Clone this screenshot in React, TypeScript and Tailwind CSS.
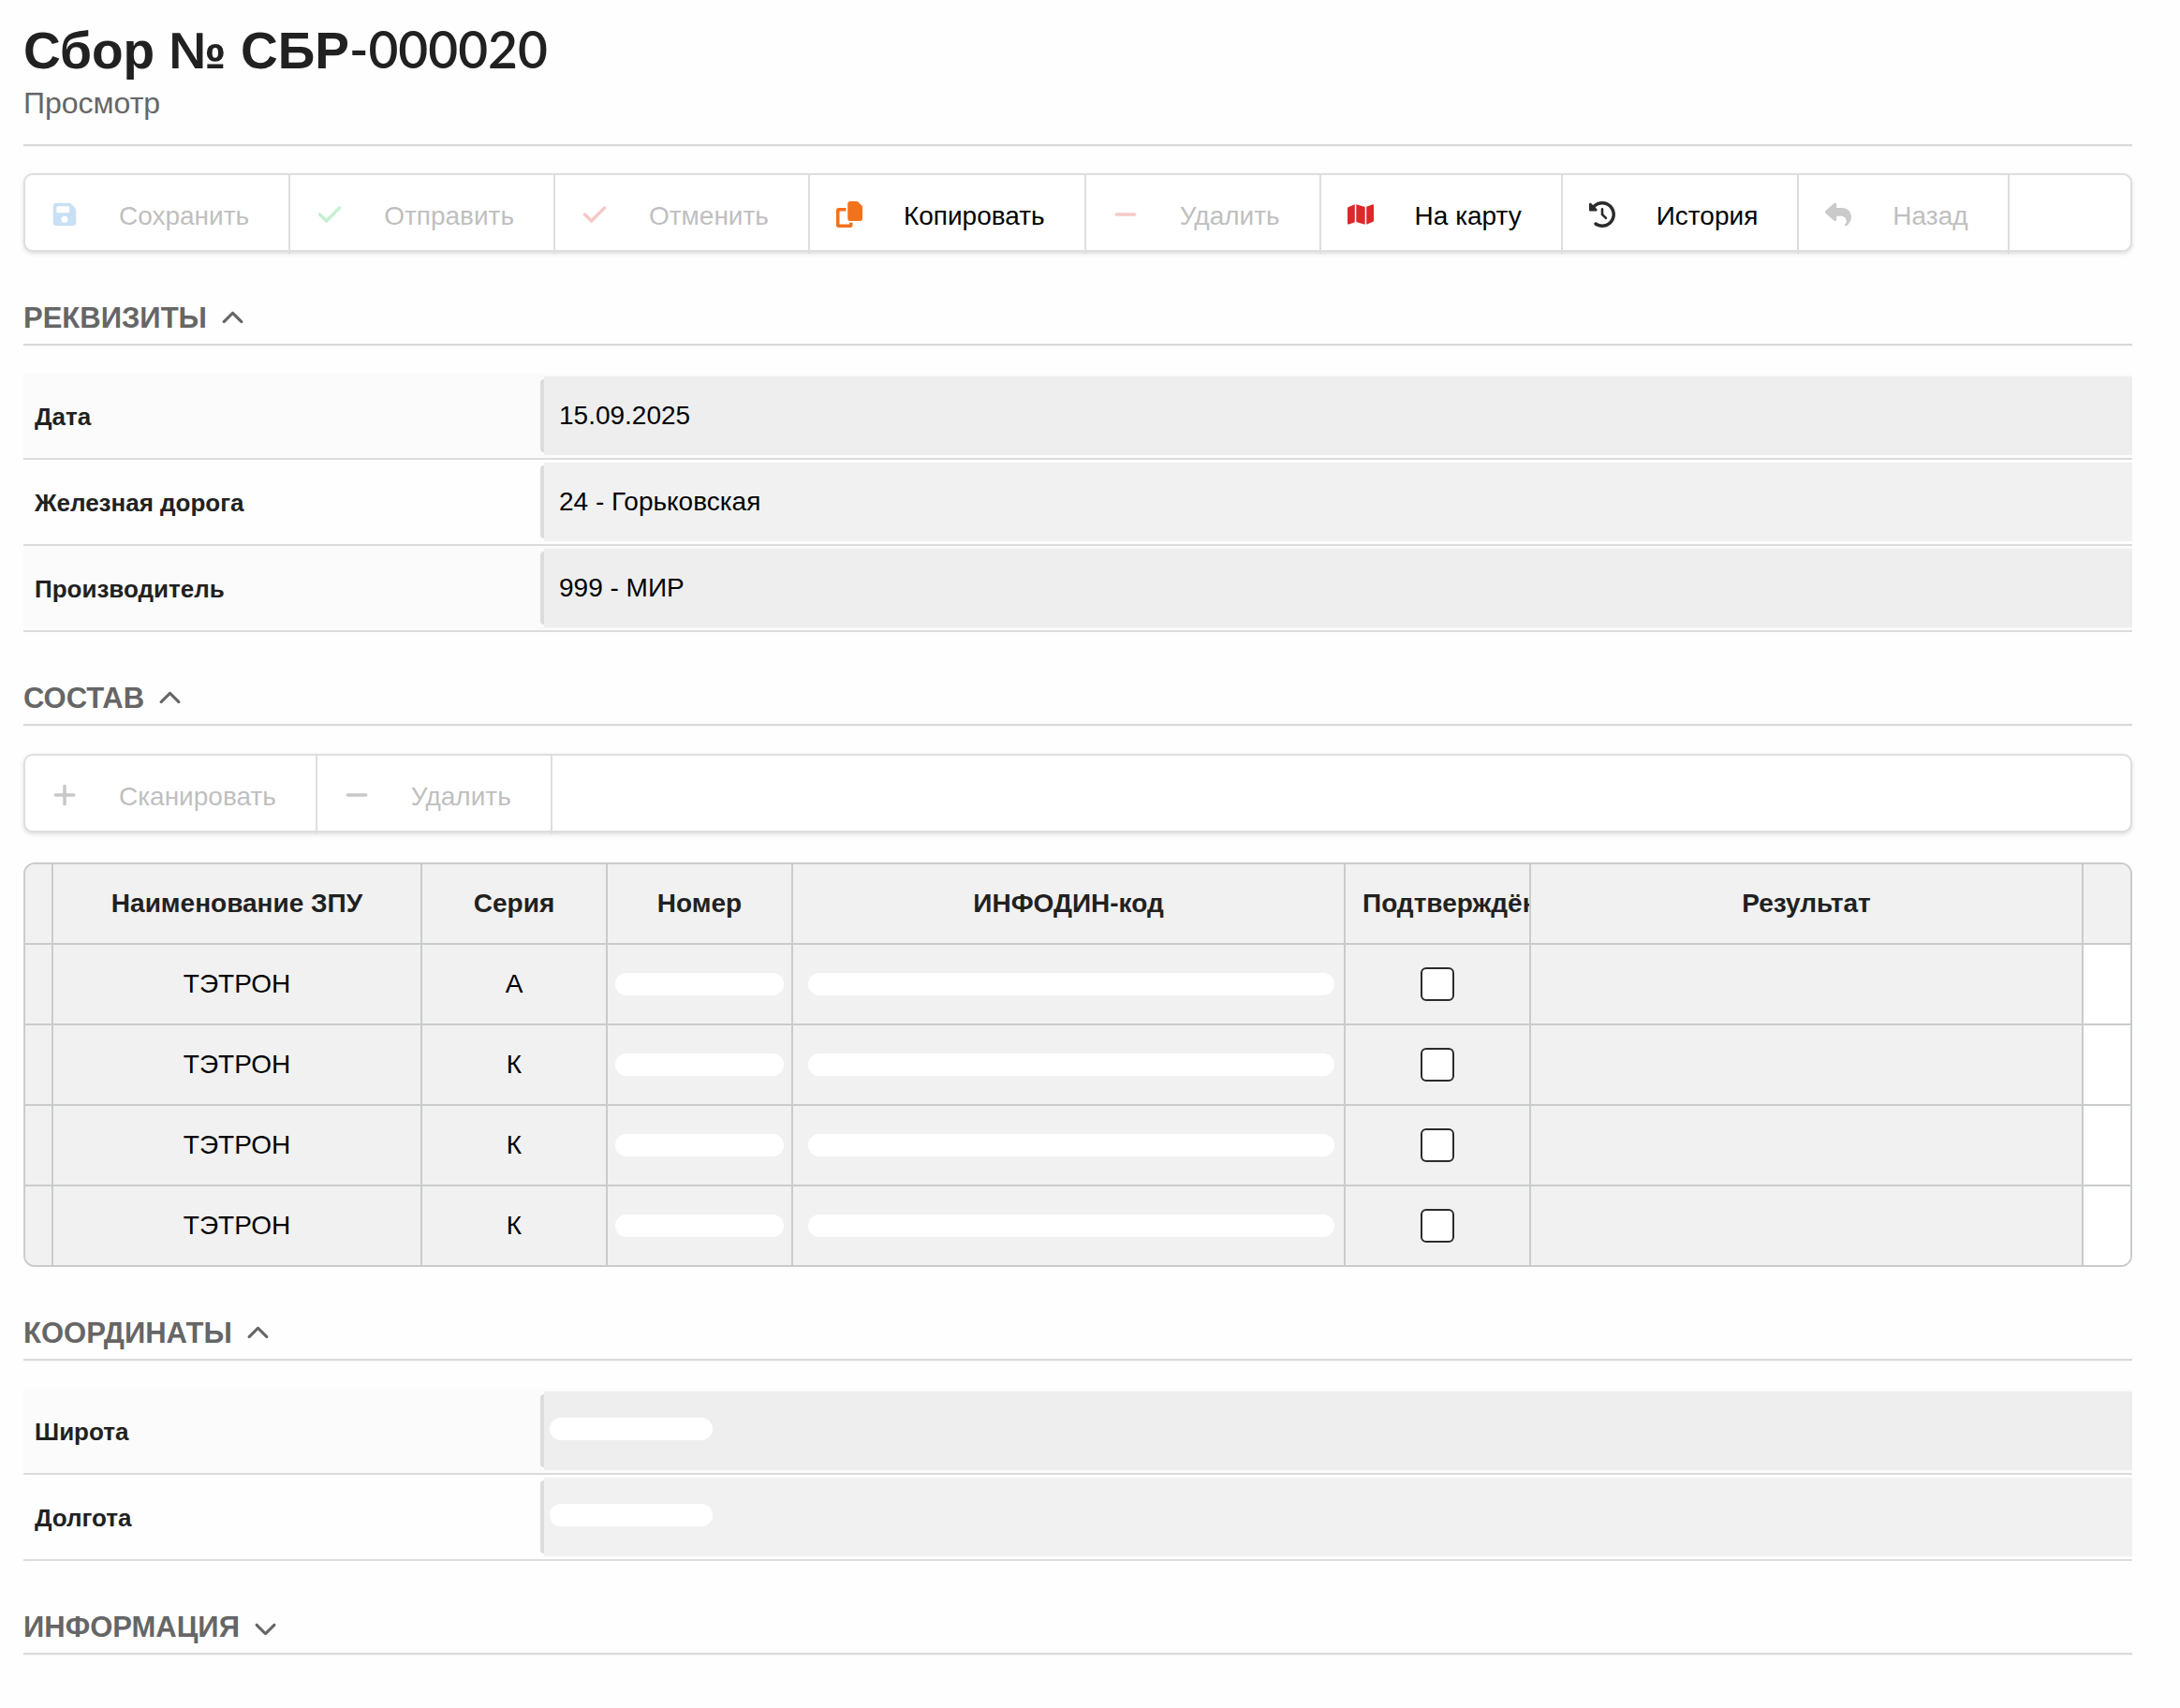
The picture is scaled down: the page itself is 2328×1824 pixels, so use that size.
import { useState } from "react"
import type { ComponentType, ReactNode } from "react"
import {
  FaCheck,
  FaChevronDown,
  FaChevronUp,
  FaClockRotateLeft,
  FaFloppyDisk,
  FaMap,
  FaMinus,
  FaPlus,
  FaReply,
} from "react-icons/fa6"

type ToolbarItem = {
  id: string
  label: string
  icon: ComponentType<{ className?: string }>
  color: string
  disabled?: boolean
}

function CopyIcon({ className }: { className?: string }) {
  return (
    <svg viewBox="0 0 512 512" fill="currentColor" className={className} aria-hidden="true">
      <path d="M272 0h124.100c12.700 0 24.900 5.100 33.900 14.100l67.900 67.900c9 9 14.100 21.200 14.100 33.900V336c0 26.500-21.500 48-48 48H272c-26.500 0-48-21.500-48-48V48c0-26.500 21.500-48 48-48z" />
      <path d="M48 128h144v64H64v256h192v-32h64v48c0 26.500-21.500 48-48 48H48c-26.500 0-48-21.500-48-48V176c0-26.500 21.500-48 48-48z" />
    </svg>
  )
}

const mainActions: ToolbarItem[] = [
  { id: "save", label: "Сохранить", icon: FaFloppyDisk, color: "text-[#c8e0f4]", disabled: true },
  { id: "send", label: "Отправить", icon: FaCheck, color: "text-[#c7efd0]", disabled: true },
  { id: "cancel", label: "Отменить", icon: FaCheck, color: "text-[#f6c8c8]", disabled: true },
  { id: "copy", label: "Копировать", icon: CopyIcon, color: "text-[#f2711c]" },
  { id: "delete", label: "Удалить", icon: FaMinus, color: "text-[#f6c8c8]", disabled: true },
  { id: "map", label: "На карту", icon: FaMap, color: "text-[#db2828]" },
  { id: "history", label: "История", icon: FaClockRotateLeft, color: "text-[#2b2b2b]" },
  { id: "back", label: "Назад", icon: FaReply, color: "text-[#cacaca]", disabled: true },
]

const listActions: ToolbarItem[] = [
  { id: "scan", label: "Сканировать", icon: FaPlus, color: "text-[#c8c8c8]", disabled: true },
  { id: "remove", label: "Удалить", icon: FaMinus, color: "text-[#c8c8c8]", disabled: true },
]

const requisites = [
  { id: "date", label: "Дата", value: "15.09.2025" },
  { id: "railway", label: "Железная дорога", value: "24 - Горьковская" },
  { id: "vendor", label: "Производитель", value: "999 - МИР" },
]

const coordinates = [
  { id: "lat", label: "Широта" },
  { id: "lon", label: "Долгота" },
]

const rows = [
  { id: 1, name: "ТЭТРОН", series: "А" },
  { id: 2, name: "ТЭТРОН", series: "К" },
  { id: 3, name: "ТЭТРОН", series: "К" },
  { id: 4, name: "ТЭТРОН", series: "К" },
]

function Toolbar({ items }: { items: ToolbarItem[] }) {
  return (
    <div className="flex flex-wrap rounded-[10px] border-2 border-[#dedede] bg-white shadow-[0_2px_4px_rgba(34,36,38,0.15)]">
      {items.map((item) => {
        const Icon = item.icon
        return (
          // separators run a little below the toolbar's bottom border
          <button
            key={item.id}
            type="button"
            disabled={item.disabled}
            className="-mb-1 flex h-[84px] items-center border-r-2 border-[#dedede] pr-[42px] pl-[25px] text-black disabled:text-[#bfbfbf]"
          >
            <span className={`flex w-[34px] justify-center ${item.color}`}>
              <Icon className="h-7 w-auto shrink-0" />
            </span>
            <span className="pt-1 pl-[41px]">{item.label}</span>
          </button>
        )
      })}
    </div>
  )
}

function Section({ title, defaultOpen = true, children }: { title: string; defaultOpen?: boolean; children?: ReactNode }) {
  const [open, setOpen] = useState(defaultOpen)
  const Chevron = open ? FaChevronUp : FaChevronDown

  return (
    <section className="pt-[51px]">
      <h2 className="border-b-2 border-[#d8d9d9] pb-[7px] text-[31px] leading-10 font-bold text-[#666] shadow-[0_1px_0_#f5f5f5]">
        <button type="button" onClick={() => setOpen(!open)} className="flex items-center gap-[15px]">
          {title}
          <Chevron className="size-[25px]" />
        </button>
      </h2>
      {open && children && <div className="pt-[30px]">{children}</div>}
    </section>
  )
}

function Field({ id, label, value }: { id: string; label: string; value?: string }) {
  return (
    <div className="flex h-[92px] border-b-2 border-[#dcdcdc] odd:bg-[#fbfbfb]">
      <label htmlFor={id} className="flex w-[552px] shrink-0 items-center pt-px pl-3 text-[26px] font-bold text-[#212121]">
        {label}
      </label>
      <div className="my-1.5 w-1 shrink-0 rounded-l bg-[#dcdcdc]" />
      <div className="relative my-[3px] flex flex-1 bg-black/5">
        <input id={id} readOnly defaultValue={value} className="w-full bg-transparent px-4 text-black outline-none" />
        {/* hidden value */}
        {!value && <span className="absolute top-7 left-1.5 h-6 w-[174px] rounded-full bg-white" />}
      </div>
    </div>
  )
}

function SealsTable() {
  const cell = "h-[86px] border-r-2 border-b-2 border-[#cacbcb] p-0 last:border-r-0"

  return (
    <div className="overflow-hidden rounded-[12px] border-2 border-[#cacbcb]">
      <table className="w-full table-fixed border-separate border-spacing-0 text-center">
        <colgroup>
          <col className="w-[30px]" />
          <col className="w-[394px]" />
          <col className="w-[198px]" />
          <col className="w-[198px]" />
          <col className="w-[590px]" />
          <col className="w-[198px]" />
          <col className="w-[590px]" />
          <col />
        </colgroup>
        <thead className="bg-[#f1f1f1] text-[#212121]">
          <tr>
            <th className={cell} />
            <th className={cell}>Наименование ЗПУ</th>
            <th className={cell}>Серия</th>
            <th className={cell}>Номер</th>
            <th className={cell}>ИНФОДИН-код</th>
            <th className={cell}>
              <div className="overflow-hidden pl-[18px] text-left whitespace-nowrap">Подтверждён</div>
            </th>
            <th className={cell}>Результат</th>
            <th className={cell} />
          </tr>
        </thead>
        <tbody className="text-black [&>tr:last-child>td]:h-[84px] [&>tr:last-child>td]:border-b-0">
          {rows.map((row) => (
            <tr key={row.id} className="bg-[#f1f1f1]">
              <td className={cell} />
              <td className={cell}>{row.name}</td>
              <td className={cell}>{row.series}</td>
              <td className={cell}>
                <div className="mx-2 h-6 rounded-full bg-white" />
              </td>
              <td className={cell}>
                <div className="mr-2.5 ml-4 h-6 rounded-full bg-white" />
              </td>
              <td className={cell}>
                <input
                  type="checkbox"
                  aria-label="Подтверждён"
                  className="mx-auto block size-9 appearance-none rounded-md border-2 border-[#2b2b2b] bg-white"
                />
              </td>
              <td className={cell} />
              <td className={`${cell} bg-white`} />
            </tr>
          ))}
        </tbody>
      </table>
    </div>
  )
}

export default function App() {
  return (
    <main className="min-h-screen bg-[#fefefe] pt-[14px] pr-[51px] pb-14 pl-[25px] font-['Liberation_Sans',Arial,sans-serif] text-[28px] leading-8">
      <header className="border-b-2 border-[#d8d9d9] pb-[26px] shadow-[0_1px_0_#f5f5f5]">
        <h1 className="text-[55px] leading-[76px] font-bold text-[#212121]">
          Сбор № СБР<span className="font-[Lato] font-semibold">-000020</span>
        </h1>
        <p className="text-[32px] leading-9 text-[#666]">Просмотр</p>
      </header>

      <div className="pt-[29px]">
        <Toolbar items={mainActions} />
      </div>

      <Section title="РЕКВИЗИТЫ">
        {requisites.map((item) => (
          <Field key={item.id} {...item} />
        ))}
      </Section>

      <Section title="СОСТАВ">
        <Toolbar items={listActions} />
        <div className="pt-8">
          <SealsTable />
        </div>
      </Section>

      <Section title="КООРДИНАТЫ">
        {coordinates.map((item) => (
          <Field key={item.id} {...item} />
        ))}
      </Section>

      <Section title="ИНФОРМАЦИЯ" defaultOpen={false} />
    </main>
  )
}
